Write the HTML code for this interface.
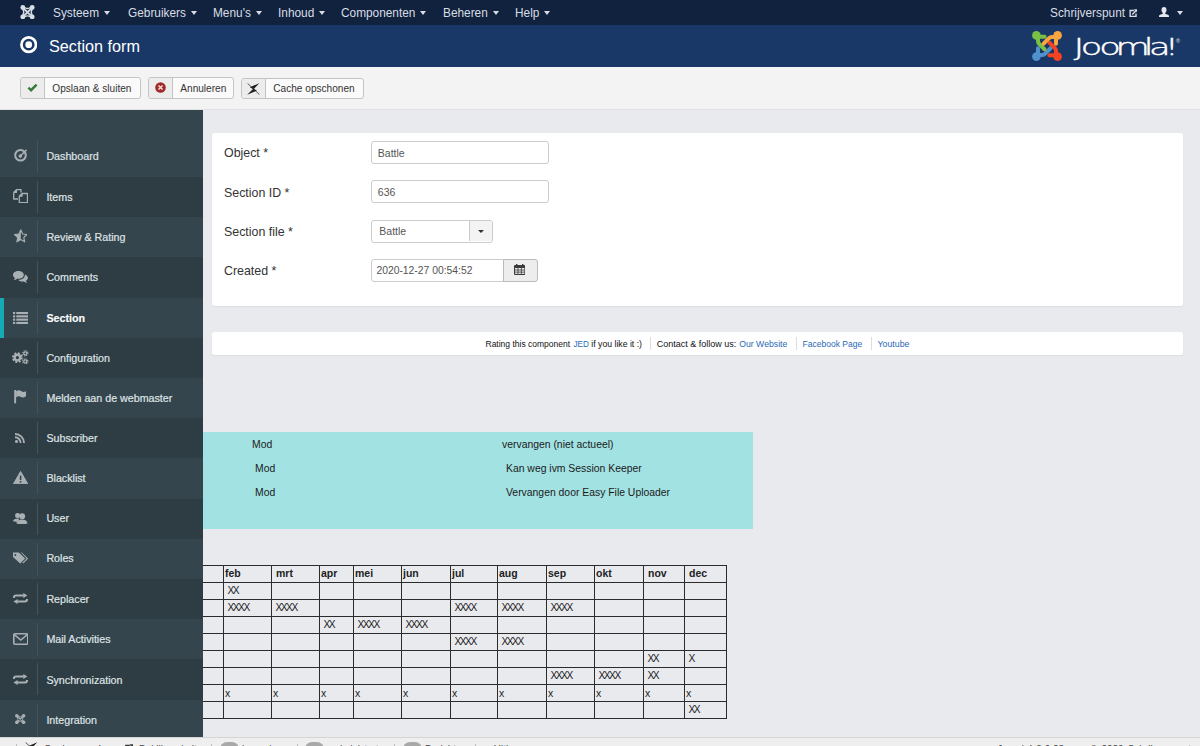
<!DOCTYPE html>
<html lang="nl">
<head>
<meta charset="utf-8">
<title>Section form</title>
<style>
*{box-sizing:border-box;margin:0;padding:0}
html,body{width:1200px;height:746px;overflow:hidden}
body{position:relative;background:#e9eaee;font-family:"Liberation Sans",Arial,sans-serif;color:#333;font-size:12px}
.abs{position:absolute}
#nav{position:absolute;left:0;top:0;width:1200px;height:25px;background:#10223e}
#nav .mi{position:absolute;top:0;height:25px;line-height:26px;color:#d9dde4;font-size:11.85px;white-space:nowrap}
#nav .mi i{display:inline-block;width:0;height:0;border-left:3.5px solid transparent;border-right:3.5px solid transparent;border-top:4px solid #d9dde4;margin-left:5px;vertical-align:2px}
#hdr{position:absolute;left:0;top:25px;width:1200px;height:42px;background:#1a3867}
#hdr h1{position:absolute;left:49px;top:0;height:42px;line-height:43px;font-size:16.2px;font-weight:normal;color:#fff;white-space:nowrap}
#tb{position:absolute;left:0;top:67px;width:1200px;height:43px;background:#f3f3f3;border-bottom:1px solid #e2e2e2}
.btn{position:absolute;top:10px;height:22px;border:1px solid #c4c4c4;border-radius:3px;background:#fafafa;font-size:10.1px;line-height:21px;color:#333;white-space:nowrap;overflow:hidden}
.btn .ic{position:absolute;left:0;top:0;width:24px;height:20px;background:#ececec;border-right:1px solid #c4c4c4}
.btn .tx{position:absolute;left:31.3px;top:0}
#side{position:absolute;left:0;top:110px;width:203px;height:627px;overflow:hidden;background:#35454d}
#side .it{position:absolute;left:0;width:203px;height:40.3px;-webkit-text-stroke:0.2px #dfe3e5;color:#dfe3e5;font-size:10.7px;white-space:nowrap}
#side .it.d{background:#2e3c43}
#side .it .sep{position:absolute;left:37px;top:4px;width:1px;height:32px;background:#44545c}
#side .it .tx{position:absolute;left:46.4px;top:0.7px;line-height:39px}
#side .it.act{box-shadow:inset 4px 0 0 #14abb5;font-weight:bold;color:#fff}
#side .it svg{position:absolute;margin-top:0.6px}
#panel{position:absolute;left:212px;top:133px;width:971px;height:173px;background:#fff;border-radius:2.5px;box-shadow:0 1px 1.5px rgba(0,0,0,.06)}
.lbl{position:absolute;left:12px;margin-top:1px;font-size:12.4px;color:#333;white-space:nowrap}
.inp{position:absolute;left:158.8px;height:22.4px;border:1px solid #ccc;border-radius:3px;background:#fff;font-size:10.5px;line-height:20.6px;padding-left:6px;color:#555;white-space:nowrap}
#foot{position:absolute;left:212px;top:332px;width:971px;height:23px;background:#fff;font-size:8.5px;line-height:25px;color:#111;white-space:nowrap;border-radius:2.5px;box-shadow:0 1px 1.5px rgba(0,0,0,.06)}
#foot a{color:#2a69b8;text-decoration:none}
#cyan{position:absolute;left:203px;top:432px;width:550px;height:97px;background:#a3e2e3;font-size:10.4px;color:#1a1a1a}
#cyan span{position:absolute;white-space:nowrap}
#status{position:absolute;left:0;top:737px;width:1200px;height:9px;background:#efefef;border-top:1px solid #d5d5d5;overflow:hidden;font-size:10.5px;color:#555}

.dd{position:absolute;right:0;top:0;width:23px;height:20px;background:#f3f3f3;border-left:1px solid #ccc;border-radius:0 2px 2px 0}
.dd i{position:absolute;left:8px;top:8.5px;width:0;height:0;border-left:3px solid transparent;border-right:3px solid transparent;border-top:3.5px solid #333}
.calb{position:absolute;left:291.3px;top:126.2px;width:34.5px;height:22.4px;border:1px solid #bbb;border-radius:0 3px 3px 0;background:#ededed}
.calb svg{position:absolute;left:9.6px;top:3.6px}
#foot .vs{position:absolute;top:5px;width:1px;height:13px;background:#ddd}
#tbl{position:absolute;left:179px;top:565px;border-collapse:collapse;table-layout:fixed;width:547px;font-size:10.5px;color:#222}
#tbl td,#tbl th{border:1px solid #2b2b2b;height:17.05px;padding:0 0 0 1px;text-align:left;line-height:15px;white-space:nowrap;overflow:hidden;vertical-align:middle}
#tbl th{font-weight:bold}
#tbl td.x{padding-left:3.4px;letter-spacing:-1.45px}
#tbl th.p{padding-left:4px}
#tbl th{padding-bottom:1px}
#tbl td.x{padding-bottom:1px;font-size:10.2px}

#side{z-index:2}
#status{z-index:3}
#status .st{position:absolute;top:4.6px;line-height:14px;white-space:nowrap;color:#444;font-size:10px}
#status .vs{position:absolute;top:6px;width:1px;height:14px;background:#bdbdbd}
#status .bdg{position:absolute;top:4.3px;width:18.5px;height:14px;border-radius:7px;background:#a9a9a9;color:#fff;font-size:9px;line-height:14px;text-align:center;font-weight:bold}
</style>
</head>
<body>
<div id="nav">
 <span class="mi" style="left:53px">Systeem<i></i></span>
 <span class="mi" style="left:128px">Gebruikers<i></i></span>
 <span class="mi" style="left:213px">Menu's<i></i></span>
 <span class="mi" style="left:278px">Inhoud<i></i></span>
 <span class="mi" style="left:341px">Componenten<i></i></span>
 <span class="mi" style="left:443px">Beheren<i></i></span>
 <span class="mi" style="left:515px">Help<i></i></span>
 <span class="mi" style="left:1050px">Schrijverspunt</span>
 <svg class="abs" style="left:19.5px;top:5px" width="15" height="14.4" viewBox="0 0 16 16"><g fill="none" stroke="#d9dde4" stroke-width="2.1" stroke-linecap="round"><path d="M3.4 3.4 L12.6 12.6 M12.6 3.4 L3.4 12.6"/></g><g fill="none" stroke="#d9dde4" stroke-width="1.5"><path d="M2.8 4.6 Q5 8 2.8 11.4 M13.2 4.6 Q11 8 13.2 11.4 M4.6 2.8 Q8 5 11.4 2.8 M4.6 13.2 Q8 11 11.4 13.2"/></g><g fill="#d9dde4"><circle cx="2.8" cy="2.8" r="2.7"/><circle cx="13.2" cy="2.8" r="2.7"/><circle cx="2.8" cy="13.2" r="2.7"/><circle cx="13.2" cy="13.2" r="2.7"/></g></svg>
 <svg class="abs" style="left:1128.5px;top:8.8px" width="8.8" height="8.2" viewBox="0 0 10 10"><path d="M6 1.9 H1 V9.2 H8.2 V5.6" fill="none" stroke="#d9dde4" stroke-width="1.7"/><path d="M3.6 6.6 L8.4 1.8" stroke="#d9dde4" stroke-width="1.7"/><path d="M5.6 0.2 H10 V4.6 Z" fill="#d9dde4"/></svg>
 <svg class="abs" style="left:1159px;top:6.5px" width="10" height="10" viewBox="0 0 10 10"><path d="M5 0 C6.7 0 7.5 1.3 7.5 2.9 C7.5 4.3 6.9 5.4 6.2 6 V6.8 C7.6 7.3 9.4 7.9 10 8.7 V10 H0 V8.7 C0.6 7.9 2.4 7.3 3.8 6.8 V6 C3.1 5.4 2.5 4.3 2.5 2.9 C2.5 1.3 3.3 0 5 0 Z" fill="#e3e6ea"/></svg>
 <i class="abs" style="left:1177px;top:11px;width:0;height:0;border-left:3.5px solid transparent;border-right:3.5px solid transparent;border-top:4px solid #d9dde4"></i>
</div>
<div id="hdr">
 <svg class="abs" style="left:20px;top:11.4px" width="17.4" height="17.4" viewBox="0 0 18 18"><circle cx="9" cy="9" r="7.5" fill="none" stroke="#fff" stroke-width="2.8"/><circle cx="9" cy="9" r="3.5" fill="#fff"/></svg>
 <h1>Section form</h1>
 <svg class="abs" style="left:1032px;top:6.2px" width="30" height="30" viewBox="0 0 30 30" fill="none" stroke-linecap="round" stroke-linejoin="round">
  <g stroke="#5091cd" stroke-width="4"><path d="M6 17.2 V23.5 M6 24 H10.2 C11.6 24 12.4 23.4 13.2 22.6 L18.4 17.4"/></g><circle cx="4.4" cy="25.6" r="4.3" fill="#5091cd"/>
  <g stroke="#f44321" stroke-width="4"><path d="M17.4 24.2 H23.5 M24 24 V19.8 C24 18.4 23.4 17.6 22.6 16.8 L17.4 11.6"/></g><circle cx="25.6" cy="25.6" r="4.3" fill="#f44321"/>
  <g stroke="#7ac143" stroke-width="4"><path d="M12.6 5.8 H6.5 M6 6 V10.2 C6 11.6 6.6 12.4 7.4 13.2 L12.6 18.4"/></g><circle cx="4.4" cy="4.4" r="4.3" fill="#7ac143"/>
  <g stroke="#f9a541" stroke-width="4"><path d="M24 12.8 V6.5 M24 6 H19.8 C18.4 6 17.6 6.6 16.8 7.4 L11.6 12.6"/></g><circle cx="25.6" cy="4.4" r="4.3" fill="#f9a541"/>
 </svg>
 <svg class="abs" style="left:1060px;top:4px" width="125" height="36" viewBox="0 0 125 36"><g transform="scale(1.5,1)"><text y="26.1" x="9.1 13.8 26.2 37 55.9 59.4 69.8" font-family="'DejaVu Sans Light','DejaVu Sans','Liberation Sans',sans-serif" font-weight="200" font-size="23.5" fill="#fff" stroke="#fff" stroke-width="0.4">Joomla!</text></g><text x="116" y="13.6" font-family="'Liberation Sans',sans-serif" font-size="5.5" fill="#dfe5ee">®</text></svg>
</div>
<div id="tb">
 <div class="btn" style="left:20px;width:121px"><span class="ic"><svg class="abs" style="left:6.2px;top:4.5px" width="11" height="9" viewBox="0 0 11 9"><path d="M1.4 4.6 L4.1 7.2 L9.6 1.6" fill="none" stroke="#367b38" stroke-width="2.4"/></svg></span><span class="tx">Opslaan &amp; sluiten</span></div>
 <div class="btn" style="left:148px;width:86px"><span class="ic"><svg class="abs" style="left:5.9px;top:4.2px" width="11" height="11" viewBox="0 0 11 11"><circle cx="5.5" cy="5.5" r="5.3" fill="#a02a27"/><path d="M3.5 3.5 L7.5 7.5 M7.5 3.5 L3.5 7.5" stroke="#f6dede" stroke-width="1.5"/></svg></span><span class="tx">Annuleren</span></div>
 <div class="btn" style="left:241px;top:11px;height:21px;width:123px"><span class="ic" style="height:19px"><svg class="abs" style="left:5px;top:3.5px" width="13" height="12" viewBox="0 0 13 12"><path d="M0.6 0.4 L12.4 11.6" stroke="#444" stroke-width="0.9"/><path d="M12.3 0.2 L2.8 4.3 L6 5.9 L0.2 11.8 L10 7.5 L6.9 5.9 Z" fill="#222"/></svg></span><span class="tx" style="line-height:19px">Cache opschonen</span></div>
</div>
<div id="side">
 <div class="it" style="top:26.8px"><svg width="13.1" height="12.6" viewBox="0 0 13.1 12.6" style="left:13.9px;top:12.1px"><circle cx="6.5" cy="6.3" r="5.3" fill="none" stroke="#a9b0b3" stroke-width="2"/><path d="M6.3 7 L12.2 1.2" stroke="#a9b0b3" stroke-width="1.5" stroke-linecap="round"/><circle cx="6.3" cy="7.1" r="1.8" fill="#a9b0b3"/></svg><span class="sep"></span><span class="tx">Dashboard</span></div>
 <div class="it d" style="top:67.0px"><svg width="15.2" height="14.4" viewBox="0 0 15.2 14.4" style="left:12.9px;top:11.3px"><g fill="none" stroke="#a9b0b3" stroke-width="1.3" stroke-linejoin="round"><path d="M0.7 3.4 L3.4 0.7 H8 V3.6 M0.7 3.4 V10 H5 M0.7 3.4 H3.4 V0.7"/><path d="M6.3 7.2 L9 4.5 H14.5 V13.7 H6.3 Z M6.3 7.2 H9 V4.5"/></g></svg><span class="sep"></span><span class="tx">Items</span></div>
 <div class="it" style="top:107.2px"><svg width="13.6" height="13.5" viewBox="0 0 13.6 13.5" style="left:13.7px;top:11.3px"><path d="M6.8 0.9 L8.7 5 L13 5.5 L9.8 8.5 L10.7 12.8 L6.8 10.6 L2.9 12.8 L3.8 8.5 L0.6 5.5 L4.9 5 Z" fill="none" stroke="#a9b0b3" stroke-width="1.2" stroke-linejoin="round"/><path d="M6.8 0.9 L4.9 5 L0.6 5.5 L3.8 8.5 L2.9 12.8 L6.8 10.6 Z" fill="#a9b0b3"/></svg><span class="sep"></span><span class="tx">Review &amp; Rating</span></div>
 <div class="it d" style="top:147.4px"><svg width="14.9" height="12" viewBox="0 0 14.9 12" style="left:13.2px;top:13.1px"><path d="M5.4 0 C2.4 0 0 1.7 0 3.9 C0 5.1 0.8 6.2 2 6.9 C1.8 7.7 1.3 8.4 0.7 9 C2.1 8.9 3.3 8.4 4.2 7.7 C4.6 7.8 5 7.8 5.4 7.8 C8.4 7.8 10.8 6.1 10.8 3.9 C10.8 1.7 8.4 0 5.4 0 Z" fill="#a9b0b3"/><path d="M11.9 3.4 C13.7 4.1 14.9 5.3 14.9 6.8 C14.9 8 14.1 9.1 12.9 9.8 C13.1 10.6 13.6 11.3 14.2 11.9 C12.8 11.8 11.6 11.3 10.7 10.6 C10.3 10.7 9.9 10.7 9.5 10.7 C8 10.7 6.6 10.3 5.7 9.6 L5.5 8.8 C9.2 8.8 11.9 6.6 11.9 3.9 Z" fill="#a9b0b3"/></svg><span class="sep"></span><span class="tx">Comments</span></div>
 <div class="it act" style="top:187.6px"><svg width="15.2" height="12" viewBox="0 0 15.2 12" style="left:12.9px;top:13.6px"><g fill="#a9b0b3"><rect x="0" y="0" width="2.2" height="2.1"/><rect x="3.3" y="0" width="11.9" height="2.1"/><rect x="0" y="3.3" width="2.2" height="2.1"/><rect x="3.3" y="3.3" width="11.9" height="2.1"/><rect x="0" y="6.6" width="2.2" height="2.1"/><rect x="3.3" y="6.6" width="11.9" height="2.1"/><rect x="0" y="9.9" width="2.2" height="2.1"/><rect x="3.3" y="9.9" width="11.9" height="2.1"/></g></svg><span class="sep"></span><span class="tx" style="top:1.9px">Section</span></div>
 <div class="it d" style="top:227.8px"><svg width="16.9" height="14.5" viewBox="0 0 16.9 14.5" style="left:12.1px;top:11.5px"><g fill="none" stroke="#a9b0b3"><circle cx="5.4" cy="7.6" r="2.8" stroke-width="2.4"/><circle cx="5.4" cy="7.6" r="4.5" stroke-width="1.9" stroke-dasharray="1.9 1.63"/><circle cx="13.3" cy="3.3" r="1.5" stroke-width="1.3"/><circle cx="13.3" cy="3.3" r="2.6" stroke-width="1.2" stroke-dasharray="1.1 0.94"/><circle cx="13.3" cy="11.4" r="1.5" stroke-width="1.3"/><circle cx="13.3" cy="11.4" r="2.6" stroke-width="1.2" stroke-dasharray="1.1 0.94"/></g></svg><span class="sep"></span><span class="tx" style="top:1.5px">Configuration</span></div>
 <div class="it" style="top:268.0px"><svg width="12" height="13.3" viewBox="0 0 12 13.3" style="left:14.2px;top:11.7px"><rect x="0.2" y="0" width="1.9" height="13.3" fill="#a9b0b3"/><path d="M2.1 0.9 C4.4 -0.2 5.9 0.2 7.6 1.3 C9.1 2.2 10.5 2 12 1.2 V6.3 C10.4 7.8 8.7 7.6 7.1 6.9 C5.4 6.1 3.9 6.1 2.1 7.2 Z" fill="#a9b0b3"/></svg><span class="sep"></span><span class="tx">Melden aan de webmaster</span></div>
 <div class="it d" style="top:308.2px"><svg width="10.7" height="10" viewBox="0 0 10.7 10" style="left:15px;top:13.8px"><circle cx="1.5" cy="8.5" r="1.5" fill="#a9b0b3"/><path d="M0 4.3 A5.7 5.7 0 0 1 5.7 10" fill="none" stroke="#a9b0b3" stroke-width="1.9"/><path d="M0 0.95 A9.05 9.05 0 0 1 9.05 10" fill="none" stroke="#a9b0b3" stroke-width="1.9"/></svg><span class="sep"></span><span class="tx">Subscriber</span></div>
 <div class="it" style="top:348.4px"><svg width="15.2" height="13.3" viewBox="0 0 15.2 13.3" style="left:12.9px;top:11.7px"><path d="M7.6 0.5 L14.7 12.8 H0.5 Z" fill="#a9b0b3" stroke="#a9b0b3" stroke-width="1" stroke-linejoin="round"/><rect x="6.8" y="4.6" width="1.6" height="4.4" fill="#36464e"/><rect x="6.8" y="10" width="1.6" height="1.6" fill="#36464e"/></svg><span class="sep"></span><span class="tx">Blacklist</span></div>
 <div class="it d" style="top:388.6px"><svg width="14.5" height="11.2" viewBox="0 0 14.5 11.2" style="left:13.2px;top:13.5px"><g fill="#a9b0b3"><circle cx="4.6" cy="2.6" r="2.5"/><path d="M0 8.3 C0.3 6.3 2.2 5.4 4.6 5.4 C5.2 5.4 5.8 5.5 6.3 5.7 L4.4 8.9 Z"/><circle cx="9.2" cy="3.2" r="2.9"/><path d="M3.4 10.6 C3.6 7.7 6 6.4 9.2 6.4 C12.4 6.4 14.3 7.7 14.5 10.6 C11.2 11.4 6.6 11.4 3.4 10.6 Z"/></g></svg><span class="sep"></span><span class="tx">User</span></div>
 <div class="it" style="top:428.8px"><svg width="15.2" height="11.7" viewBox="0 0 15.2 11.7" style="left:12.9px;top:12.7px"><path d="M0 0.6 H5.8 L12.2 6.6 L7.2 11.5 L0 5 Z" fill="#a9b0b3"/><circle cx="2.3" cy="2.9" r="1" fill="#36464e"/><path d="M7.8 0.6 H8.8 L15.2 6.6 L10.2 11.5 L9.4 10.7 L13.6 6.6 Z" fill="#a9b0b3"/></svg><span class="sep"></span><span class="tx">Roles</span></div>
 <div class="it d" style="top:469.0px"><svg width="14.9" height="10.9" viewBox="0 0 14.9 10.9" style="left:13.2px;top:13.5px"><g fill="none" stroke="#a9b0b3" stroke-width="2"><path d="M0.9 5 V4.4 C0.9 3.3 1.8 2.5 2.9 2.5 H10.8"/><path d="M14 5.9 V6.5 C14 7.6 13.1 8.4 12 8.4 H4.1"/></g><path d="M10.3 0 L14.4 2.5 L10.3 5 Z" fill="#a9b0b3"/><path d="M4.6 5.9 L0.5 8.4 L4.6 10.9 Z" fill="#a9b0b3"/></svg><span class="sep"></span><span class="tx">Replacer</span></div>
 <div class="it" style="top:509.2px"><svg width="15.6" height="12" viewBox="0 0 15.6 12" style="left:12.9px;top:12.9px"><rect x="0.8" y="0.8" width="14" height="10.4" rx="1.2" fill="none" stroke="#a9b0b3" stroke-width="1.6"/><path d="M1 1.4 L7.8 7 L14.6 1.4" fill="none" stroke="#a9b0b3" stroke-width="1.5"/></svg><span class="sep"></span><span class="tx">Mail Activities</span></div>
 <div class="it d" style="top:549.4px"><svg width="14.9" height="10.9" viewBox="0 0 14.9 10.9" style="left:13.2px;top:13.7px"><g fill="none" stroke="#a9b0b3" stroke-width="2"><path d="M0.9 5 V4.4 C0.9 3.3 1.8 2.5 2.9 2.5 H10.8"/><path d="M14 5.9 V6.5 C14 7.6 13.1 8.4 12 8.4 H4.1"/></g><path d="M10.3 0 L14.4 2.5 L10.3 5 Z" fill="#a9b0b3"/><path d="M4.6 5.9 L0.5 8.4 L4.6 10.9 Z" fill="#a9b0b3"/></svg><span class="sep"></span><span class="tx" style="top:1.5px">Synchronization</span></div>
 <div class="it" style="top:589.6px"><svg width="10.4" height="10.1" viewBox="0 0 10.4 10.1" style="left:15.3px;top:13.7px"><g fill="none" stroke="#a9b0b3" stroke-width="1.3" stroke-linecap="round"><path d="M2.2 2.2 L8.2 7.9 M8.2 2.2 L2.2 7.9"/></g><g fill="none" stroke="#a9b0b3" stroke-width="0.9"><path d="M2 3 Q4 5.05 2 7.1 M8.4 3 Q6.4 5.05 8.4 7.1 M3 2 Q5.2 4 7.4 2 M3 8.1 Q5.2 6.1 7.4 8.1"/></g><g fill="#a9b0b3"><circle cx="1.8" cy="1.8" r="1.8"/><circle cx="8.6" cy="1.8" r="1.8"/><circle cx="1.8" cy="8.3" r="1.8"/><circle cx="8.6" cy="8.3" r="1.8"/></g></svg><span class="sep"></span><span class="tx" style="top:1.6px">Integration</span></div>
</div>
<div id="panel">
 <span class="lbl" style="top:12.2px">Object *</span>
 <span class="lbl" style="top:51.8px">Section ID *</span>
 <span class="lbl" style="top:90.8px">Section file *</span>
 <span class="lbl" style="top:130px">Created *</span>
 <div class="inp" style="top:8.3px;width:178.7px;padding-top:1px">Battle</div>
 <div class="inp" style="top:47.3px;width:178.7px;padding-top:1px">636</div>
 <div class="inp" style="top:87.3px;width:122px;padding-left:7.5px">Battle<span class="dd"><i></i></span></div>
 <div class="inp" style="top:126.2px;width:133px;border-radius:3px 0 0 3px;padding-left:4.6px;padding-top:1px;font-size:10.35px">2020-12-27 00:54:52</div>
 <div class="calb"><svg width="11.4" height="11" viewBox="0 0 11.4 11"><rect x="0" y="1" width="11.4" height="10" rx="1" fill="#3b3b3b"/><rect x="2" y="0" width="1.4" height="2" fill="#3b3b3b"/><rect x="8" y="0" width="1.4" height="2" fill="#3b3b3b"/><rect x="1.1" y="4" width="9.2" height="5.9" fill="#eee"/><g fill="#3b3b3b"><rect x="1.1" y="5.6" width="9.2" height="0.8"/><rect x="1.1" y="7.7" width="9.2" height="0.8"/><rect x="3.6" y="4" width="0.8" height="5.9"/><rect x="6.9" y="4" width="0.8" height="5.9"/></g></svg></div>
</div>
<div id="foot">
 <span class="abs" style="left:273.5px;font-size:8.5px">Rating this component</span>
 <span class="abs" style="left:361.5px;font-size:8.2px"><a>JED</a></span>
 <span class="abs" style="left:379.3px;font-size:8.7px">if you like it :)</span>
 <span class="vs" style="left:438px"></span>
 <span class="abs" style="left:444.8px;font-size:9px">Contact &amp; follow us:</span>
 <span class="abs" style="left:527.2px;font-size:8.7px"><a>Our Website</a></span>
 <span class="vs" style="left:584px"></span>
 <span class="abs" style="left:590.6px;font-size:8.5px"><a>Facebook Page</a></span>
 <span class="vs" style="left:659px"></span>
 <span class="abs" style="left:665.5px;font-size:8.8px"><a>Youtube</a></span>
</div>
<div id="cyan">
 <span style="left:49px;top:7px">Mod</span>
 <span style="left:52px;top:31px">Mod</span>
 <span style="left:52px;top:55px">Mod</span>
 <span style="left:299px;top:7px">vervangen (niet actueel)</span>
 <span style="left:303px;top:31px">Kan weg ivm Session Keeper</span>
 <span style="left:303px;top:55px">Vervangen door Easy File Uploader</span>
</div>
<table id="tbl"><colgroup><col style="width:44px"><col style="width:48px"><col style="width:48px"><col style="width:34px"><col style="width:48px"><col style="width:49px"><col style="width:47px"><col style="width:49px"><col style="width:48px"><col style="width:49px"><col style="width:41px"><col style="width:42px"></colgroup>
<tr><th></th><th>feb</th><th class="p">mrt</th><th>apr</th><th>mei</th><th>jun</th><th>jul</th><th>aug</th><th>sep</th><th>okt</th><th class="p">nov</th><th class="p">dec</th></tr>
<tr><td></td><td class="x">XX</td><td></td><td></td><td></td><td></td><td></td><td></td><td></td><td></td><td></td><td></td></tr>
<tr><td></td><td class="x">XXXX</td><td class="x">XXXX</td><td></td><td></td><td></td><td class="x">XXXX</td><td class="x">XXXX</td><td class="x">XXXX</td><td></td><td></td><td></td></tr>
<tr><td></td><td></td><td></td><td class="x">XX</td><td class="x">XXXX</td><td class="x">XXXX</td><td></td><td></td><td></td><td></td><td></td><td></td></tr>
<tr><td></td><td></td><td></td><td></td><td></td><td></td><td class="x">XXXX</td><td class="x">XXXX</td><td></td><td></td><td></td><td></td></tr>
<tr><td></td><td></td><td></td><td></td><td></td><td></td><td></td><td></td><td></td><td></td><td class="x">XX</td><td class="x">X</td></tr>
<tr><td></td><td></td><td></td><td></td><td></td><td></td><td></td><td></td><td class="x">XXXX</td><td class="x">XXXX</td><td class="x">XX</td><td></td></tr>
<tr><td></td><td>x</td><td>x</td><td>x</td><td>x</td><td>x</td><td>x</td><td>x</td><td>x</td><td>x</td><td>x</td><td>x</td></tr>
<tr><td></td><td></td><td></td><td></td><td></td><td></td><td></td><td></td><td></td><td></td><td></td><td class="x">XX</td></tr>
</table>
<div id="status">
 <span class="vs" style="left:16px"></span>
 <svg class="abs" style="left:24.5px;top:3.6px" width="13" height="12" viewBox="0 0 13 12"><path d="M0.6 0.4 L12.4 11.6" stroke="#444" stroke-width="0.9"/><path d="M12.3 0.2 L2.8 4.3 L6 5.9 L0.2 11.8 L10 7.5 L6.9 5.9 Z" fill="#222"/></svg>
 <span class="st" style="left:43.7px;font-size:10.4px">Cache opschonen</span>
 <svg class="abs" style="left:125px;top:6px" width="8" height="8" viewBox="0 0 10 10"><path d="M6 1.9 H1 V9.2 H8.2 V5.6" fill="none" stroke="#333" stroke-width="1.7"/><path d="M3.6 6.6 L8.4 1.8" stroke="#333" stroke-width="1.7"/><path d="M5.6 0.2 H10 V4.6 Z" fill="#333"/></svg>
 <span class="st" style="left:139px">Bekijk website</span>
 <span class="vs" style="left:210.5px"></span>
 <span class="bdg" style="left:220px">0</span><span class="st" style="left:242px">bezoekers</span>
 <span class="vs" style="left:296.5px"></span>
 <span class="bdg" style="left:305px">1</span><span class="st" style="left:331.5px;letter-spacing:-.2px">administrator</span>
 <span class="vs" style="left:394px"></span>
 <span class="bdg" style="left:403px">0</span><span class="st" style="left:425px">Berichten</span>
 <span class="vs" style="left:475px"></span>
 <span class="st" style="left:481px">— Uitloggen</span>
 <span class="st" style="right:9px;word-spacing:1.2px">Joomla! 3.9.23 &nbsp;— &nbsp;© 2020 Schrijverspunt</span>
</div>
</body>
</html>
